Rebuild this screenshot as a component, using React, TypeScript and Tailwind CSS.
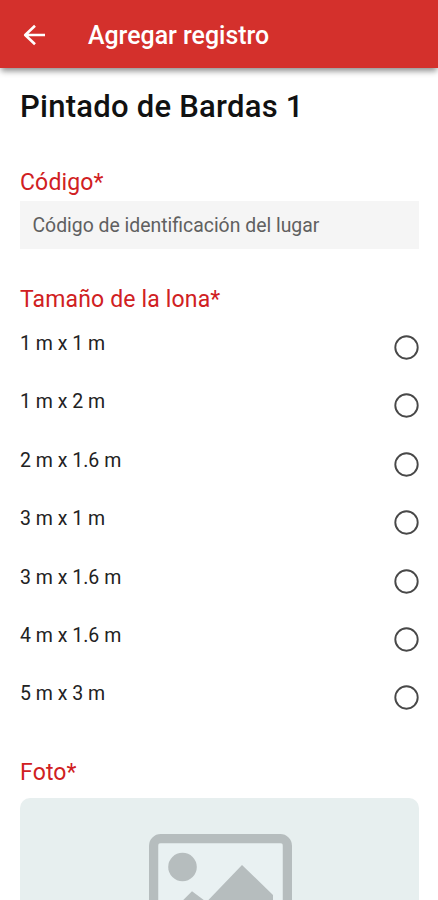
import React, { useState } from 'react'

const SIZES = [
  '1 m x 1 m',
  '1 m x 2 m',
  '2 m x 1.6 m',
  '3 m x 1 m',
  '3 m x 1.6 m',
  '4 m x 1.6 m',
  '5 m x 3 m',
]

interface SizeOptionProps {
  label: string
  selected: boolean
  onSelect: () => void
}

const SizeOption: React.FC<SizeOptionProps> = ({ label, selected, onSelect }) => (
  <button
    role="radio"
    aria-checked={selected}
    onClick={onSelect}
    className="flex h-[58.4px] w-full items-start justify-between text-left"
  >
    <span className="text-[19.5px] leading-6 text-[#222222]">{label}</span>
    <svg className="mt-[3px] size-[25px]" viewBox="0 0 25 25" fill="none">
      <circle cx="12.5" cy="12.5" r="11.2" stroke="#484848" strokeWidth="1.9" />
      {selected && <circle cx="12.5" cy="12.5" r="6" fill="#d4302c" />}
    </svg>
  </button>
)

const FieldLabel: React.FC<{ children: React.ReactNode }> = ({ children }) => (
  <h2 className="text-[23px] leading-7 tracking-[0.15px] text-[#d02022]">{children}</h2>
)

const PhotoPlaceholder = () => (
  <svg className="h-[126px] w-[143px]" viewBox="0 0 143 126" fill="none">
    <rect x="4.75" y="4.75" width="133.5" height="116.5" rx="7" fill="#e9f1f2" stroke="#b6bdbe" strokeWidth="9.5" />
    <rect x="9.5" y="9.5" width="124" height="107" rx="1" fill="#e9f1f2" />
    <circle cx="33.5" cy="33" r="14.3" fill="#b6bdbe" />
    <path d="M19 81 43 57.3 57.5 68 93 31 124 61V107H19Z" fill="#b6bdbe" />
  </svg>
)

export default function App() {
  const [code, setCode] = useState('')
  const [size, setSize] = useState<string | null>(null)

  return (
    <div className="h-[900px] w-full overflow-hidden bg-white font-['Roboto',sans-serif]">
      <header className="flex h-[68px] items-center bg-[#d4302c] pl-[23px] text-white shadow-[0_4px_6px_-1px_rgba(0,0,0,0.45)]">
        <button aria-label="Volver" className="mt-[1px]">
          <svg
            className="h-[22px] w-[23px]"
            viewBox="0 0 23 22"
            fill="none"
            stroke="currentColor"
            strokeWidth="2.6"
            strokeLinejoin="round"
          >
            <path d="M22 11H2M12 1.7 2.2 11 12 20.3" />
          </svg>
        </button>
        <h1 className="ml-[42px] mt-[3px] text-[24.9px] font-medium leading-8">Agregar registro</h1>
      </header>

      <main className="pl-5 pr-[19px]">
        <h2 className="mt-[21px] text-[31px] font-medium leading-9 tracking-[0.25px] text-[#111111]">
          Pintado de Bardas 1
        </h2>

        <section className="mt-11">
          <FieldLabel>Código*</FieldLabel>
          <input
            value={code}
            onChange={(e) => setCode(e.target.value)}
            placeholder="Código de identificación del lugar"
            className="mt-[4px] block h-12 w-full bg-[#f5f5f5] px-[12.5px] text-[19.4px] text-[#505050] outline-none placeholder:text-[#606060]"
          />
        </section>

        <section className="mt-[37px]">
          <FieldLabel>Tamaño de la lona*</FieldLabel>
          <div role="radiogroup" className="mt-[18px]">
            {SIZES.map((option) => (
              <SizeOption
                key={option}
                label={option}
                selected={size === option}
                onSelect={() => setSize(option)}
              />
            ))}
          </div>
        </section>

        <section className="mt-[18px]">
          <FieldLabel>Foto*</FieldLabel>
          <div className="mt-[11px] flex h-[200px] justify-center rounded-[10px] bg-[#e7efef] pl-[2px] pt-9">
            <PhotoPlaceholder />
          </div>
        </section>
      </main>
    </div>
  )
}
